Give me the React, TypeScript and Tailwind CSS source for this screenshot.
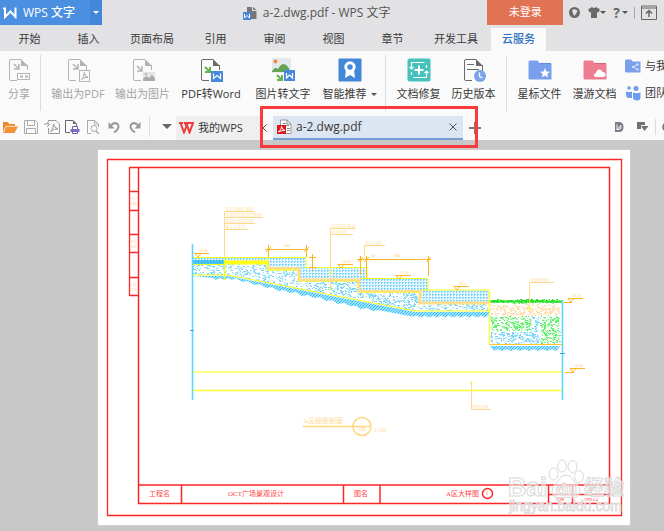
import type { ReactNode } from "react";

const UI_FONT = "font-['Open_Sans','Noto_Sans_CJK_SC',sans-serif]";

/* ---------- icons ---------- */

function Page({ muted = false, children }: { muted?: boolean; children?: ReactNode }) {
  const line = muted ? "#b4b4b4" : "#6b6b6b";
  return (
    <svg width="24" height="24" viewBox="0 0 24 24" fill="none" aria-hidden="true">
      <path d="M14 1.5H4Q2.500 1.500 2.500 3V21Q2.500 22.500 4 22.500H10M20.500 7V12" stroke={line} />
      <path d="M14 1L21 8H14Z" fill={line} />
      {children}
    </svg>
  );
}

function ShareIcon() {
  return (
    <Page muted>
      <path d="M7 6L12 11M12 6V11H7" stroke="#b4b4b4" strokeWidth="1.500" />
      <rect x="10.500" y="15.500" width="12" height="6" fill="#fafafa" stroke="#b4b4b4" />
      <path d="M13 18.500h3M18 18.500h3" stroke="#b4b4b4" strokeWidth="2" />
    </Page>
  );
}

function ToPdfIcon() {
  return (
    <Page muted>
      <path d="M7 6L12 11M12 6V11H7" stroke="#b4b4b4" strokeWidth="1.500" />
      <rect x="13.500" y="12.500" width="10" height="11" fill="#fafafa" stroke="#b4b4b4" />
      <path d="M15.500 21.500Q18.500 19 18.300 14.500Q18.500 18.500 22 19.500Q18 18.800 15.500 21.500" stroke="#aaa" />
    </Page>
  );
}

function ToImageIcon() {
  return (
    <Page muted>
      <path d="M6 8L11 13M11 8V13H6" stroke="#b4b4b4" strokeWidth="1.500" />
      <rect x="12" y="14" width="12" height="9" fill="#e4e4e4" />
      <path d="M12 23V21L15 18L18 20L21 17L24 20V23Z" fill="#aaa" />
      <circle cx="15" cy="16" r="1" fill="#aaa" />
    </Page>
  );
}

function ToWordIcon() {
  return (
    <Page>
      <path d="M6 9L11 14M11 9V14H6" stroke="#65b54c" strokeWidth="2" />
      <rect x="12" y="13" width="12" height="11" fill="#4788d8" />
      <path d="M14.500 15.500V20.500L18 17.500L21.500 20.500V15.500" stroke="#fff" strokeWidth="1.200" />
    </Page>
  );
}

function ImageToTextIcon() {
  return (
    <svg width="24" height="24" viewBox="0 0 24 24" fill="none" aria-hidden="true">
      <rect x="1" y="0" width="19" height="15" fill="#e3e9ef" />
      <circle cx="4.500" cy="3.500" r="2" fill="#f38b3c" />
      <path d="M1 13Q4 8 7 11Q12 2 17 9L20 14H1Z" fill="#66a352" />
      <path d="M6 17L11 22M11 17V22H6" stroke="#65b54c" strokeWidth="2" />
      <rect x="13" y="12" width="11" height="11" fill="#4788d8" />
      <path d="M15.500 15V20L18.500 17L21.500 20V15" stroke="#fff" strokeWidth="1.200" />
    </svg>
  );
}

function RecommendIcon() {
  return (
    <svg width="24" height="24" viewBox="0 0 24 24" fill="none" aria-hidden="true">
      <rect x="0.500" y="0.500" width="23" height="23" rx="1" fill="#4387d9" />
      <path d="M8 12L7 20L12 17L17 20L16 12" fill="#fff" />
      <circle cx="12" cy="9" r="4.200" fill="#4387d9" stroke="#fff" strokeWidth="3" />
    </svg>
  );
}

function RepairIcon() {
  return (
    <svg width="24" height="24" viewBox="0 0 24 24" fill="none" stroke="#fff" strokeWidth="1.200" aria-hidden="true">
      <rect x="0.500" y="0.500" width="23" height="23" rx="2" fill="#46c1bb" stroke="none" />
      <path d="M4.500 11V4.500H17.500M19.500 13V19.500H6.500M2.500 9L4.500 11L6.500 9M17.500 15L19.500 13L21.500 15M4.500 14V17M19.500 7V10" />
      <path d="M12 7.500V16.500M7.500 12H16.500" strokeWidth="2" />
    </svg>
  );
}

function HistoryIcon() {
  return (
    <Page>
      <path d="M5 6.500H12M5 11.500H17M20.500 8V14" stroke="#6b6b6b" />
      <circle cx="18" cy="18" r="6" fill="#7ba3ee" />
      <path d="M17.500 14.500V18.500L20.500 20" stroke="#fff" strokeWidth="1.300" />
    </Page>
  );
}

function FolderIcon({ kind }: { kind: "star" | "cloud" }) {
  const star = kind === "star";
  return (
    <svg width="24" height="24" viewBox="0 0 24 24" aria-hidden="true">
      <path d="M0.500 4Q0.500 2.500 2 2.500H9.500L11.500 5H22Q23.500 5 23.500 6.500V21.500H2Q0.500 21.500 0.500 20Z" fill={star ? "#7a9fed" : "#ef7d92"} />
      <path d="M12 5.500H23" stroke={star ? "#5d88dd" : "#db6078"} />
      {star ? (
        <path d="M17 10L18.400 13.500L22 13.700L19.200 16L20.200 19.500L17 17.500L13.800 19.500L14.800 16L12 13.700L15.600 13.500Z" fill="#fff" />
      ) : (
        <path d="M12.500 19Q10.500 18.500 11 16.500Q11.500 15 13 15Q13.500 11.500 16.500 11.500Q19 11.500 19.500 14Q22.500 14 22.500 16.500Q22.500 19 20 19Z" fill="#fff" />
      )}
    </svg>
  );
}

function SharedFolderIcon() {
  return (
    <svg width="16" height="14" viewBox="0 0 16 14" fill="none" aria-hidden="true">
      <path d="M0 2Q0 0.500 1.500 0.500H6L7.500 2.500H15.500V13.500H1.500Q0 13.500 0 12Z" fill="#7a9fed" />
      <path d="M12.500 5.500L8 8L12.500 10.500" stroke="#dbe6ff" />
      <path d="M11.500 4.500h2v2h-2zM7 7h2v2h-2zM11.500 9.500h2v2h-2z" fill="#dbe6ff" />
    </svg>
  );
}

function TeamIcon() {
  return (
    <svg width="16" height="16" viewBox="0 0 16 16" fill="#6d9cf0" aria-hidden="true">
      <circle cx="4" cy="3" r="1.800" />
      <circle cx="11" cy="3.500" r="2.500" />
      <path d="M1 6.500Q4 7.500 7 6.500V13H3Q1 12 1 9ZM8 7.500Q11.500 9 15.500 7.500V13Q15 15.500 12 15.500Q8.500 15.500 8 13Z" />
    </svg>
  );
}

function FolderOpenIcon() {
  return (
    <svg width="16" height="14" viewBox="0 0 16 14" aria-hidden="true">
      <path d="M1 12V2H6L7 4H13V6H4L1 12" fill="#f3852b" />
      <path d="M4 6.500H16L12.500 13H1Z" fill="#f59036" />
      <path d="M1.500 12L4.300 6.300H13" fill="none" stroke="#fde3c8" strokeWidth="0.800" />
    </svg>
  );
}

function SaveIcon() {
  return (
    <svg width="14" height="14" viewBox="0 0 14 14" fill="none" stroke="#aaa" aria-hidden="true">
      <path d="M1 0.500H11.500L13.500 2.500V13.500H0.500V0.500M3.500 1V5.500H10.500V1M2.500 13V8.500H11.500V13" />
    </svg>
  );
}

function ExportPdfIcon() {
  return (
    <svg width="16" height="14" viewBox="0 0 16 14" fill="none" stroke="#999" aria-hidden="true">
      <path d="M4.500 2V0.500H12L15.500 4V13.500H4.500V8M0 4H5M3 2L5.500 4.500L3 7" />
      <path d="M6.500 11.500Q10 8 9.500 4Q10.500 8 14 9Q10 8.500 6.500 11.500" />
    </svg>
  );
}

function PrintIcon() {
  return (
    <svg width="16" height="14" viewBox="0 0 16 14" fill="none" aria-hidden="true">
      <path d="M6 12.500H1.500V0.500H9L12.500 4V6" stroke="#666" />
      <path d="M9 0.500V4H12.500Z" fill="#666" />
      <path d="M8.500 9V6.500H13.500V9M8.500 11V13.500H13.500V11" stroke="#6a63b4" />
      <path d="M6.500 9H15.500V12H6.500Z" fill="#7770bd" />
    </svg>
  );
}

function PreviewIcon() {
  return (
    <svg width="14" height="14" viewBox="0 0 14 14" fill="none" stroke="#aaa" aria-hidden="true">
      <path d="M5 13.500H1.500V0.500H8.500L12.500 4V7M8.500 0.500V4H12" />
      <circle cx="8" cy="8.500" r="3" />
      <path d="M10 11L13 14" strokeWidth="1.500" />
    </svg>
  );
}

function UndoIcon({ flip = false }: { flip?: boolean }) {
  return (
    <svg width="12" height="12" viewBox="0 0 12 12" fill="none" aria-hidden="true">
      <g transform={flip ? "translate(12 0) scale(-1 1)" : undefined}>
        <path d="M2.500 5Q6 0.500 9.500 3Q12.500 7 6 11.500" stroke="#999" strokeWidth="2" />
        <path d="M0.500 1V7.500H6.500Z" fill="#999" />
      </g>
    </svg>
  );
}

function Caret({ className = "border-t-[#555]" }: { className?: string }) {
  return <span className={`inline-block border-x-[3px] border-t-[3px] border-x-transparent ${className}`} />;
}

/* ---------- ribbon ---------- */

function RibbonButton({ icon, label, width, muted = false, caret = false }: {
  icon: ReactNode; label: string; width: string; muted?: boolean; caret?: boolean;
}) {
  return (
    <button type="button" disabled={muted} className={`flex shrink-0 flex-col items-center gap-1 pt-[7px] ${width} ${muted ? "text-[#a3a3a3]" : "text-[#383838]"}`}>
      {icon}
      <span className="flex items-center gap-1 whitespace-nowrap text-[11px] leading-4">
        {label}
        {caret && <Caret />}
      </span>
    </button>
  );
}

function Divider() {
  return <span className="mx-[5px] mt-1 h-14 w-px shrink-0 bg-[#dcdcdc]" />;
}

/* ---------- drawing ---------- */

type Point = [number, number];

function specks(seed: number, x: number, y: number, w: number, h: number, count: number) {
  let s = seed;
  const next = () => {
    s = (s * 16807) % 2147483647;
    return s / 2147483647;
  };
  let d = "";
  for (let i = 0; i < count; i++) {
    const px = Math.round(x + next() * (w - 2));
    const py = Math.round(y + next() * (h - 1)) + 0.5;
    d += `M${px} ${py}l${next() > 0.5 ? 2 : 1} ${next() > 0.6 ? 1 : 0}`;
  }
  return d;
}

const SOIL = specks(77, 193, 262, 296, 50, 3600);
const ORANGE_FILL = specks(11, 490, 304, 71, 12, 260);
const GREEN_LEFT = specks(23, 490, 316, 42, 15, 210);
const GREEN_RIGHT = specks(31, 540, 316, 21, 28, 190);
const BLUE_LEFT = specks(43, 490, 332, 50, 12, 200);
const BLUE_MID = specks(59, 532, 315, 8, 18, 40);
const GRASS = specks(67, 490, 299, 71, 4, 150);

function LevelMark({ x, y, tip, w = 15, label }: { x: number; y: number; tip: number; w?: number; label: string }) {
  return (
    <g>
      <path d={`M${x} ${y}h${w}M${tip - 3} ${y}l3 3.500l3 -3.500`} fill="none" stroke="#ffb51f" />
      <text x={tip + 1} y={y - 2} fontSize="4" fill="#ffd073">{label}</text>
    </g>
  );
}

function Note({ points, lines, texts }: { points: [Point, Point]; lines: [number, number][]; texts: string[] }) {
  const [[x, y1], [, y2]] = points;
  return (
    <g>
      <path d={`M${x} ${y1}V${y2}` + lines.map(([y, end]) => `M${x} ${y}H${end}`).join("")} stroke="#ffd98c" />
      {lines.map(([y], i) => (
        <text key={y} x={x + 1} y={y - 1} fontSize="4" fill="#ffe3ab">{texts[i]}</text>
      ))}
    </g>
  );
}

function Drawing() {
  return (
    <svg viewBox="98 150 532 375" className="block w-full font-['Liberation_Serif','Noto_Sans_CJK_SC',serif]" fill="none" role="img" aria-label="A区细部剖面">
      <defs>
        <pattern id="tile" width="3" height="3" patternUnits="userSpaceOnUse">
          <rect width="3" height="3" fill="#e6f7ff" />
          <path d="M0 0.500H2M0.500 0V2" stroke="#7ad2f8" />
        </pattern>
        <pattern id="earth" width="3" height="3" patternUnits="userSpaceOnUse">
          <rect width="3" height="3" fill="#a0e2ff" />
          <path d="M0 3L3 0" stroke="#2fbcfa" />
        </pattern>
        <clipPath id="soil">
          <path d="M193 264H267V270H298V281H358V292H419V304H489V311H415L228 275H193Z" />
        </clipPath>
      </defs>

      {/* sheet frame and title block */}
      <g stroke="#ff2626">
        <path d="M107.500 159.500H621.500V515.500H107.500Z" strokeWidth="1.300" />
        <path d="M138.500 167.500H609.500V503.500H138.500Z" strokeWidth="1.500" />
        <path d="M129.500 167.500H138M129.500 191.500H138M129.500 210.500H138M129.500 234.500H138M129.500 252.500H138M129.500 277.500H138M129.500 295.500H138M129.500 167V296" strokeWidth="1.300" />
        <path d="M138 485H610M181.500 485V503M343.500 485V503M380 485V503M548.500 485V503M572.500 485V503M548 494.500H610" strokeWidth="1.500" />
        <circle cx="487.500" cy="493.500" r="5" strokeWidth="1.500" />
      </g>
      <g fill="#f44" fontSize="7">
        <text x="149" y="496">工程名</text>
        <text x="228" y="496">OCT广场景观设计</text>
        <text x="354" y="496">图名</text>
        <text x="446" y="496">A区大样图</text>
        <g fontSize="4">
          <text x="486" y="495">2</text>
          <text x="556" y="491">图号</text>
          <text x="589" y="491">05</text>
          <text x="556" y="501">日期</text>
          <text x="584" y="501">1999.6.4</text>
        </g>
      </g>
      <g fill="#ffd9b0" fontSize="3">
        <text x="131" y="200">设计</text><text x="131" y="205">制图</text>
        <text x="131" y="243">校对</text><text x="131" y="248">审核</text>
        <text x="131" y="286">比例</text><text x="131" y="291">专业</text>
      </g>

      {/* earth below the steps */}
      <path d="M193 276H228L415 312H489V315l-4 2.500l-4 -2l-4 2l-4 -2l-4 2l-4 -2l-4 2l-4 -2l-4 2l-4 -2l-4 2l-4 -2l-4 2l-4 -2l-4 2l-4 -2l-4 2l-4 -2l-5 1L378 310l-5 1l-6 -3l-6 1l-5 -3l-6 0l-6 -3l-6 1l-6 -4l-6 1l-6 -4l-6 1l-6 -3l-6 1l-6 -4l-6 1l-6 -3l-6 1l-6 -4l-6 1l-6 -4l-6 1l-6 -4l-6 1l-6 -4l-4 2l-4 -2l-4 2l-4 -2l-4 2l-3 -2Z" fill="url(#earth)" />
      <path d="M490 346H560L556 351l-4 -2l-5 2l-4 -2l-5 2l-4 -2l-5 2l-4 -2l-5 2l-4 -2l-5 2l-4 -2l-5 2l-4 -2l-4 2Z" fill="url(#earth)" />
      <path d={SOIL} stroke="#7dd5f8" clipPath="url(#soil)" />

      {/* treads */}
      <g fill="url(#tile)">
        <path d="M193 258H269V264H193ZM269 258H306V268H269ZM299 268H367V279H299ZM360 279H428V290H360ZM421 290H489V302H421Z" />
      </g>
      <path d="M193 260H225V264H193Z" fill="#25b7f0" opacity="0.800" />
      <path d="M225 262H268V269H299V280H359V291.500H420V303H489" stroke="#ffe08c" strokeWidth="3" />
      <path d="M225 262.500H268" stroke="#ffff1a" strokeWidth="4" />
      <path d="M192 257.500H306V268M306 267.500H367V279M360 278.500H428V290M421 290H489V303M193 264.500H225M192 275H228L415 311H489M267.500 258V270H299M299 270V281H359M359 281V292H420M420 292V303" stroke="#f4ff20" />
      <path d="M269 268H299V280H359V291H420V303H489" stroke="#ffdb8a" strokeWidth="1.500" />

      {/* planting bed */}
      <path d={ORANGE_FILL} stroke="#ffdca8" />
      <path d={GREEN_LEFT} stroke="#62f06f" />
      <path d={GREEN_RIGHT} stroke="#62f06f" />
      <path d={BLUE_LEFT} stroke="#80d5fc" />
      <path d={BLUE_MID} stroke="#80d5fc" />
      <path d="M490 301.500H562" stroke="#2fe52f" strokeWidth="2" />
      <path d={GRASS} stroke="#27df27" />
      <path d="M489.500 291V344" stroke="#ffff4d" strokeWidth="1.500" />
      <path d="M489 344.500H562" stroke="#ffc52e" />

      {/* ground lines and cut edges */}
      <path d="M193 372H562" stroke="#ffff80" strokeWidth="2" />
      <path d="M193 390.500H562" stroke="#ffff2e" strokeWidth="1.500" />
      <path d="M192.500 244V400M562.500 300V400" stroke="#5fd3ff" strokeWidth="1.600" />
      <path d="M190 330.500H194M560 353.500H565" stroke="#2aaef0" />

      {/* dimensions */}
      <g stroke="#ffb51f">
        <path d="M265 249.500H308M268.500 245V257M306.500 245V257M266 252l5 -5M304 252l5 -5" />
        <path d="M312.500 254V271M309 257.500H316M309 267.500H316" />
        <path d="M357 259.500H431M360.500 256V275M366.500 256V278M428.500 256V276M358 262l5 -5M364 262l5 -5M426 262l5 -5" />
      </g>
      <g fontSize="4" fill="#ffc95c">
        <text x="284" y="247">300</text>
        <text x="371" y="257">50</text>
        <text x="394" y="257">300</text>
      </g>
      <LevelMark x={194} y={253.5} tip={198} label="18.60" />
      <LevelMark x={338} y={264.5} tip={341} label="18.45" />
      <LevelMark x={396} y={275.5} tip={399} label="18.30" />
      <LevelMark x={454} y={286.5} tip={457} label="18.15" />
      <LevelMark x={568} y={298.5} tip={571} label="18.10" />
      <LevelMark x={570} y={368.5} tip={573} label="18.00" />
      <path d="M564 302.500H572M565 372.500H574" stroke="#ffb51f" />

      <Note points={[[224.5, 211], [224.5, 279]]} lines={[[211.5, 254], [217.5, 263], [223.5, 255], [229.5, 248]]} texts={["花岗岩面层铺装", "水泥砂浆结合层厚度", "混凝土垫层厚度", "素土夯实层"]} />
      <Note points={[[330.5, 228], [330.5, 290]]} lines={[[228.5, 355], [234.5, 353]]} texts={["花岗岩石板铺", "水泥砂浆"]} />
      <Note points={[[364.5, 245], [364.5, 260]]} lines={[[245.5, 385]]} texts={["花岗石板"]} />
      <Note points={[[529.5, 282], [529.5, 309]]} lines={[[282.5, 554]]} texts={["回填种植土"]} />
      <Note points={[[471.5, 382], [471.5, 409]]} lines={[[409.5, 491]]} texts={["管沟位置"]} />
      <path d="M224.500 258V280M330.500 271v3M330.500 287v3M471 381.500v2M529.500 307v3" stroke="#e8ff20" strokeWidth="1.500" />

      {/* section title */}
      <g stroke="#ffd780" strokeWidth="1.500">
        <path d="M303 426.500H371" />
        <circle cx="362" cy="426.500" r="9" />
      </g>
      <g fill="#ffdb94">
        <text x="303" y="423" fontSize="7">A区细部剖面</text>
        <text x="374" y="432" fontSize="7">1:10</text>
        <text x="361" y="424" fontSize="4">1</text>
        <text x="358" y="431" fontSize="4">详图</text>
      </g>

      {/* watermark */}
      <g fill="#fff" fillOpacity="0.550" stroke="#d9d9d9" className="font-['Liberation_Sans','Noto_Sans_CJK_SC',sans-serif] font-bold">
        <ellipse cx="553.500" cy="474" rx="4.500" ry="6" />
        <ellipse cx="562" cy="466" rx="4.500" ry="6" />
        <ellipse cx="572.500" cy="466.500" rx="4.500" ry="6" />
        <ellipse cx="579" cy="476.500" rx="4.500" ry="6" />
        <path d="M566 475Q571 475 574 481Q580 486 580 491Q579 499 572 498Q566 496 560 498Q552 498 552 491Q552 486 558 481Q561 475 566 475Z" />
        <text x="508" y="496" fontSize="25">Bai</text>
        <text x="556" y="495" fontSize="17">du</text>
        <text x="584" y="495" fontSize="20">经验</text>
        <text x="509" y="511" fontSize="14" strokeWidth="0.800" className="font-normal">jingyan.baidu.com</text>
      </g>
    </svg>
  );
}

/* ---------- window ---------- */

const MENU = ["开始", "插入", "页面布局", "引用", "审阅", "视图", "章节", "开发工具"];

export default function App() {
  return (
    <div className={`flex min-h-screen flex-col overflow-hidden bg-[#c8c8c8] text-[#383838] ${UI_FONT}`}>
      <header className="bg-[#e2e2e5]">
        <div className="flex h-[25px] items-center">
          <button type="button" className="flex h-full w-[90px] shrink-0 items-center gap-1.5 bg-[#4a8fe0] pl-[3px] text-xs font-medium whitespace-nowrap text-white">
            <svg width="14" height="12" viewBox="0 0 14 12" fill="none" stroke="#fff" strokeWidth="2" aria-hidden="true">
              <path d="M0 1.500H2V10L7.500 4.500L12.500 10V0.500" />
            </svg>
            WPS 文字
          </button>
          <button type="button" aria-label="菜单" className="flex h-full w-3 shrink-0 items-center justify-center bg-[#4387d8]">
            <Caret className="border-t-white" />
          </button>
          <h1 className="flex flex-1 items-center justify-center gap-1.5 pl-11 text-xs whitespace-nowrap text-[#555]">
            <svg width="14" height="14" viewBox="0 0 14 14" aria-hidden="true">
              <path d="M4 1H9V5H13.500V13H4Z" fill="#777" />
              <path d="M10 1L13.500 4H10Z" fill="#777" />
              <rect y="6" width="8" height="8" fill="#4788d8" />
              <path d="M1.500 8V12L4 9.500L6.500 12V8" fill="none" stroke="#fff" />
            </svg>
            a-2.dwg.pdf - WPS 文字
          </h1>
          <button type="button" className="h-full w-[76px] shrink-0 bg-[#e17254] text-[11px] text-white">未登录</button>
          <div className="flex h-full shrink-0 items-center pr-[7px] pl-[5px] text-[#666]">
            <button type="button" aria-label="网络">
              <svg width="13" height="13" viewBox="0 0 13 13" aria-hidden="true">
                <circle cx="6.500" cy="6.500" r="5.500" fill="#6a6a6a" />
                <path d="M4 4.500L6 3L9.500 4.500L8.500 7L6.500 10L5 7.500Z" fill="#e2e2e5" />
              </svg>
            </button>
            <button type="button" aria-label="皮肤" className="ml-[7px] flex items-center">
              <svg width="12" height="11" viewBox="0 0 12 11" fill="#6a6a6a" aria-hidden="true">
                <path d="M4 0Q6 2 8 0L12 2.500L10.500 5.500L9 5V11H3V5L1.500 5.500L0 2.500Z" />
              </svg>
              <Caret />
            </button>
            <button type="button" aria-label="帮助" className="ml-[7px] flex items-center gap-0.5 text-sm font-bold">
              ?
              <Caret />
            </button>
            <span className="mx-1.5 h-3 w-px bg-[#aaa]" />
            <button type="button" aria-label="收起功能区">
              <svg width="16" height="15" viewBox="0 0 16 15" fill="none" stroke="#666" aria-hidden="true">
                <path d="M0.500 1H15.500V14.500H0.500ZM0.500 3H15.500" />
                <path d="M8 12V6M5 8.500L8 5.500L11 8.500" strokeWidth="1.500" />
              </svg>
            </button>
          </div>
        </div>
        <nav className="flex h-[26px] items-end text-[11px]">
          {MENU.map((name) => (
            <button key={name} type="button" className={`h-[23px] shrink-0 whitespace-nowrap ${name.length > 2 ? "w-[68px]" : "w-[59px]"}`}>
              {name}
            </button>
          ))}
          <button type="button" aria-current="page" className="ml-px h-[23px] w-[55px] shrink-0 bg-[#fafafa] font-medium text-[#2d6fc0]">云服务</button>
        </nav>
      </header>

      <section aria-label="云服务" className="flex h-[62px] overflow-hidden bg-[#fafafa]">
        <RibbonButton icon={<ShareIcon />} label="分享" width="w-[35px] pl-[3px]" muted />
        <Divider />
        <RibbonButton icon={<ToPdfIcon />} label="输出为PDF" width="w-16" muted />
        <RibbonButton icon={<ToImageIcon />} label="输出为图片" width="w-[65px]" muted />
        <RibbonButton icon={<ToWordIcon />} label="PDF转Word" width="w-[72px]" />
        <RibbonButton icon={<ImageToTextIcon />} label="图片转文字" width="w-[72px]" />
        <RibbonButton icon={<RecommendIcon />} label="智能推荐" width="w-[61px]" caret />
        <Divider />
        <RibbonButton icon={<RepairIcon />} label="文档修复" width="w-[55px]" />
        <RibbonButton icon={<HistoryIcon />} label="历史版本" width="w-[55px]" />
        <Divider />
        <RibbonButton icon={<FolderIcon kind="star" />} label="星标文件" width="w-[55px]" />
        <RibbonButton icon={<FolderIcon kind="cloud" />} label="漫游文档" width="w-[55px]" />
        <div className="ml-[3px] flex flex-col gap-[11px] pt-[7px] text-[11px] leading-4 whitespace-nowrap">
          <button type="button" className="flex items-center gap-1"><SharedFolderIcon />与我共享</button>
          <button type="button" className="flex items-center gap-1"><TeamIcon />团队文档</button>
        </div>
      </section>

      <div className="flex h-[27px] items-center bg-[#fafafa] text-xs">
        <div className="flex shrink-0 items-center pl-0.5">
          <button type="button" aria-label="打开"><FolderOpenIcon /></button>
          <button type="button" aria-label="保存" className="ml-1.5"><SaveIcon /></button>
          <button type="button" aria-label="输出为PDF" className="ml-1.5"><ExportPdfIcon /></button>
          <button type="button" aria-label="打印" className="ml-1"><PrintIcon /></button>
          <button type="button" aria-label="打印预览" className="ml-1.5"><PreviewIcon /></button>
          <button type="button" aria-label="撤销" className="ml-2"><UndoIcon /></button>
          <button type="button" aria-label="恢复" className="ml-[9px]"><UndoIcon flip /></button>
          <span className="mx-2 h-5 w-px bg-[#dcdcdc]" />
          <button type="button" aria-label="更多" className="flex w-[18px] justify-center">
            <span className="border-x-[5px] border-t-[5px] border-x-transparent border-t-[#666]" />
          </button>
        </div>
        <button type="button" className="flex h-6 w-[84px] shrink-0 items-center gap-1 self-end bg-[#efefef] pl-[3px] text-[11px] whitespace-nowrap">
          <svg width="15" height="12" viewBox="0 0 15 12" fill="none" stroke="#ee3b3b" strokeWidth="2" aria-hidden="true">
            <path d="M0 1H4M1.500 1L5 10.500L8 3L10.500 10.500L14 1H6L8 5" />
          </svg>
          我的WPS
        </button>
        <div className="relative flex h-6 shrink-0 items-center self-end">
          <button type="button" aria-label="向左滚动" className="flex w-[13px] justify-start pl-0.5">
            <svg width="5" height="8" viewBox="0 0 5 8" fill="none" stroke="#555" aria-hidden="true"><path d="M4.500 0.500L1 4L4.500 7.500" /></svg>
          </button>
          <div className="flex h-full w-[190px] items-center border-b-2 border-[#759fd4] bg-[#dce6f2] pr-1.5 pl-1">
            <svg width="15" height="16" viewBox="0 0 15 16" fill="none" aria-hidden="true">
              <path d="M3.500 1H10L14 5V14.500H3.500Z" fill="#fff" stroke="#999" />
              <path d="M10 1V5H14M6 4.500H9M6 6.500H12M10 9.500H13M10 11.500H13" stroke="#888" />
              <rect y="6" width="9" height="9" fill="#e0161b" />
              <path d="M1.500 13Q5 10 4.500 7.500Q5 10.500 8 11.500Q5 11 1.500 13" stroke="#fff" />
            </svg>
            <button type="button" className="ml-1 flex-1 text-left">a-2.dwg.pdf</button>
            <button type="button" aria-label="关闭">
              <svg width="8" height="8" viewBox="0 0 8 8" stroke="#555" aria-hidden="true"><path d="M0.500 0.500L7.500 7.500M7.500 0.500L0.500 7.500" /></svg>
            </button>
          </div>
          <button type="button" aria-label="新建标签" className="ml-1.5">
            <svg width="12" height="12" viewBox="0 0 12 12" stroke="#777" strokeWidth="2" aria-hidden="true"><path d="M6 0V12M0 6H12" /></svg>
          </button>
          <span className="pointer-events-none absolute -top-2.5 right-[3px] -bottom-2 left-0 border-[3px] border-[#fa3b3e]" />
        </div>
        <div className="ml-auto flex items-center">
          <button type="button" aria-label="文档助手">
            <svg width="10" height="10" viewBox="0 0 10 10" aria-hidden="true">
              <path d="M1 0H5Q9.500 0 9.500 5Q9.500 10 5 10H1Z" fill="#777c88" />
              <path d="M3 8V2.500M3 8L7 3M4 8Q8 7 7 4" fill="none" stroke="#fafafa" />
            </svg>
          </button>
          <button type="button" aria-label="标签列表" className="ml-3">
            <svg width="13" height="11" viewBox="0 0 13 11" fill="#707070" aria-hidden="true">
              <path d="M1 1H9V4H5V8H1ZM5 5H12.500L8.500 10Z" />
            </svg>
          </button>
          <span className="ml-1.5 h-4 w-px bg-[#dcdcdc]" />
          <button type="button" aria-label="查找" className="ml-1.5 w-0.5 overflow-hidden">
            <svg width="10" height="10" viewBox="0 0 10 10" fill="none" stroke="#666" strokeWidth="1.500" aria-hidden="true"><circle cx="5" cy="5" r="4" /></svg>
          </button>
        </div>
      </div>

      <main className="flex-1 pt-2.5 pr-[34px] pb-1.5 pl-[98px]">
        <div className="bg-white shadow-[0_0_1px_#eee]">
          <Drawing />
        </div>
      </main>
    </div>
  );
}
